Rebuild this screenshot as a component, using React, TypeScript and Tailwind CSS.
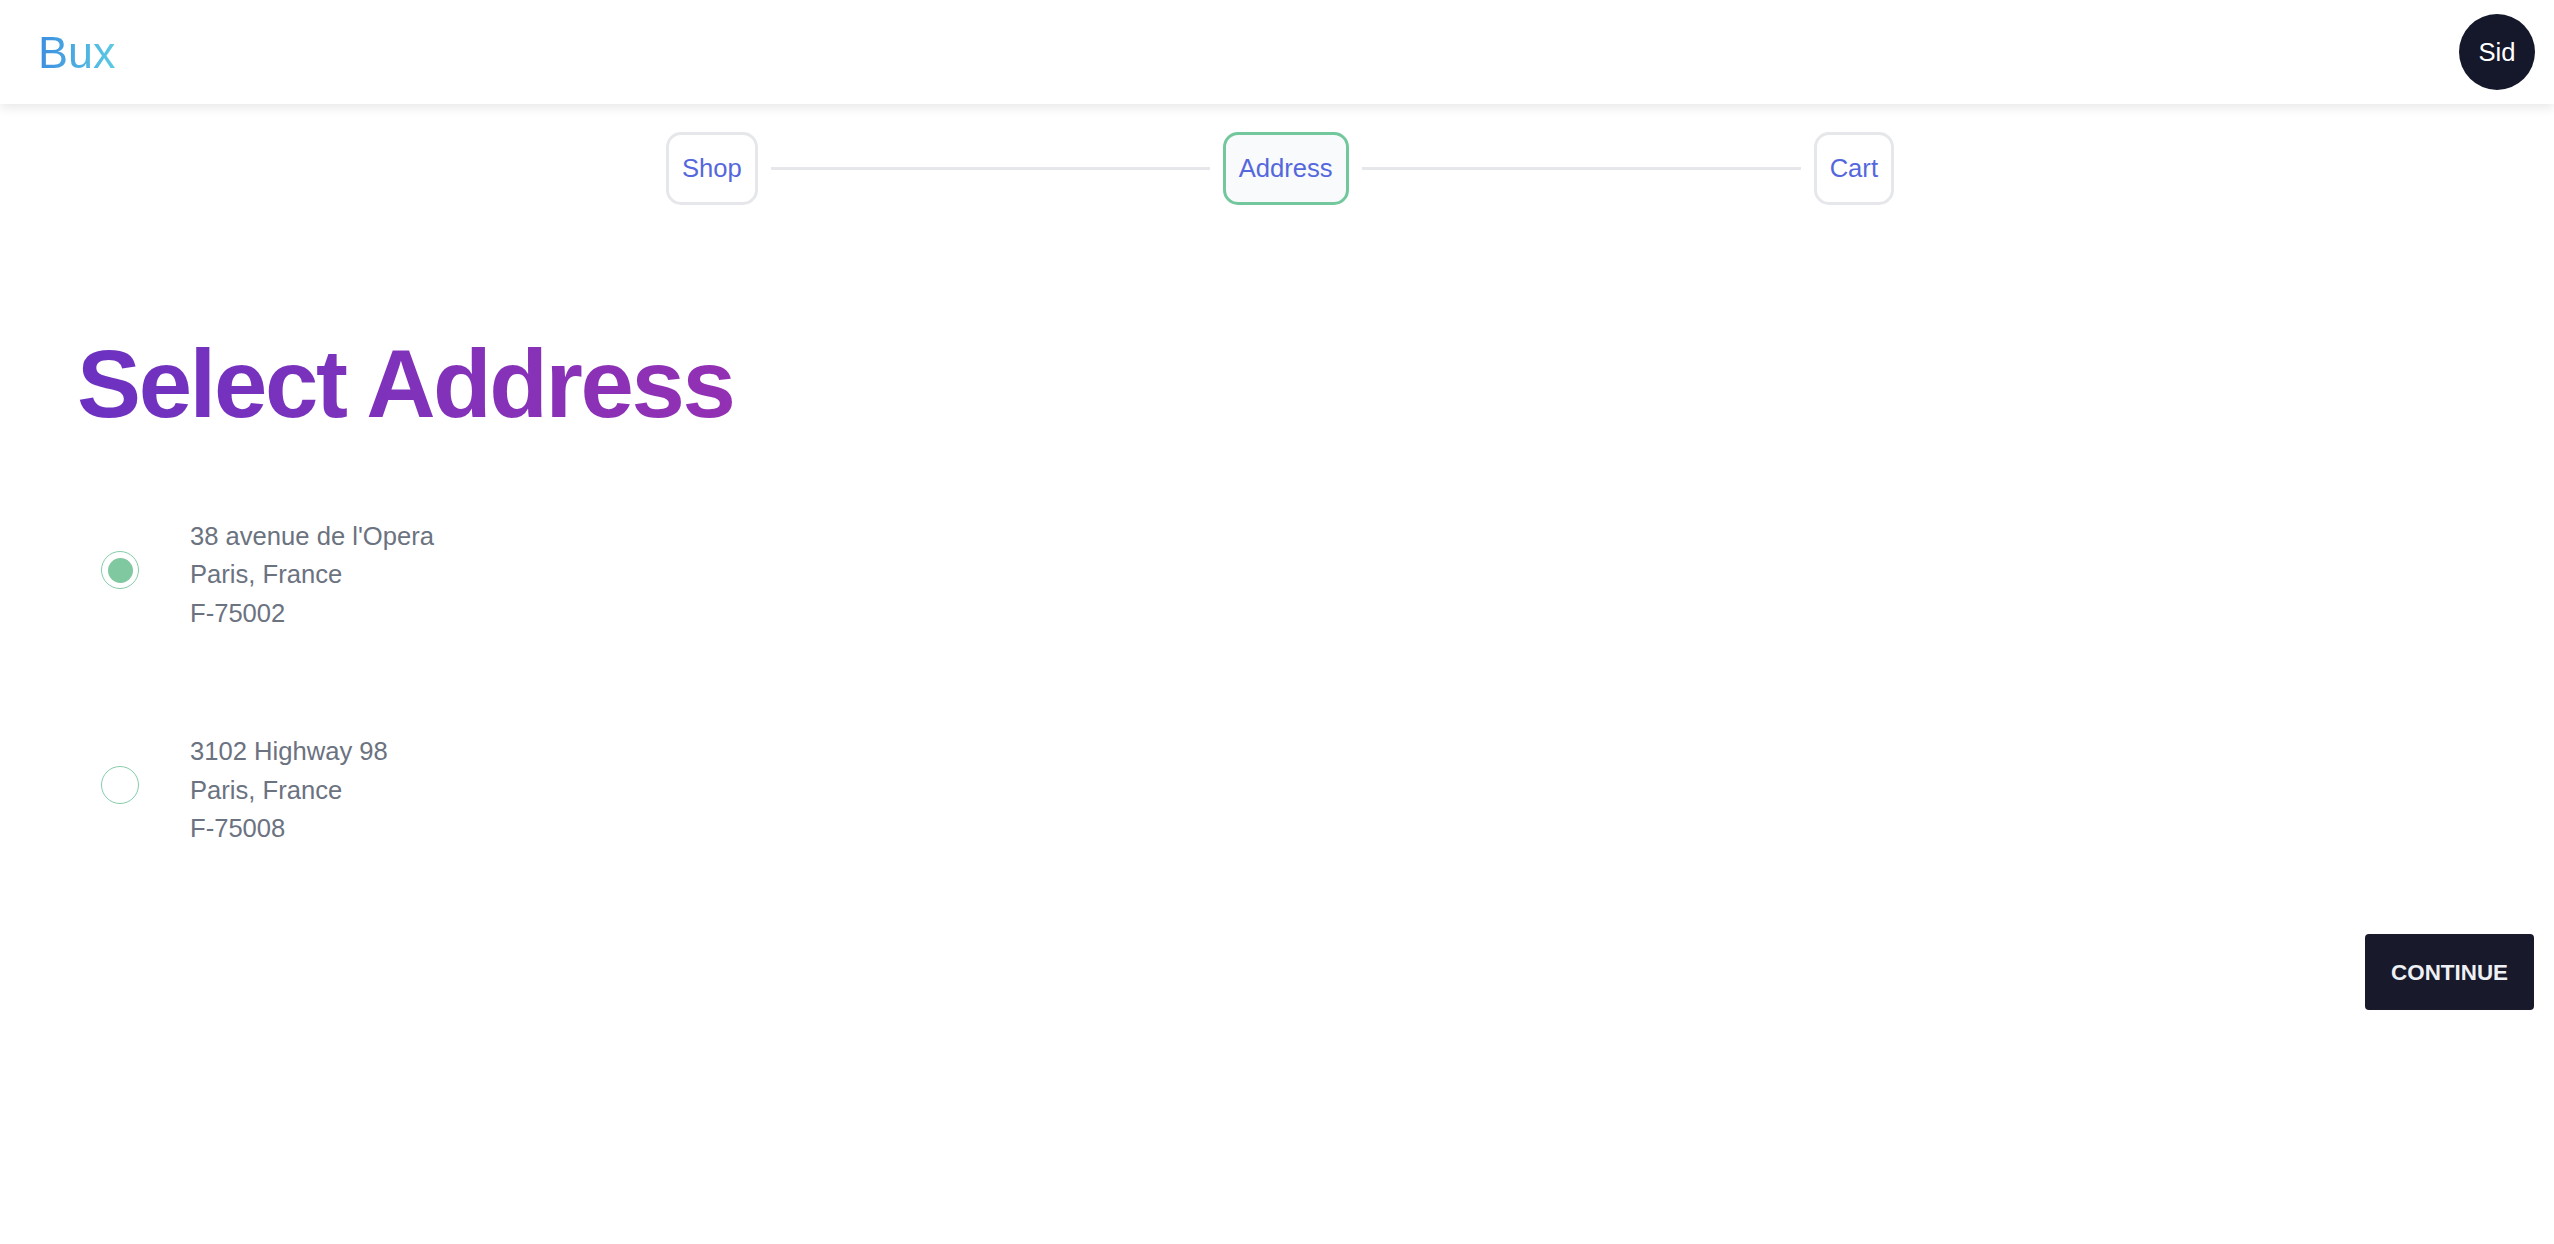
import React, { useState } from 'react';

type Address = { id: number; street: string; city: string; zip: string };

const addresses: Address[] = [
  { id: 1, street: "38 avenue de l'Opera", city: 'Paris, France', zip: 'F-75002' },
  { id: 2, street: '3102 Highway 98', city: 'Paris, France', zip: 'F-75008' },
];

const steps = ['Shop', 'Address', 'Cart'];

const Step: React.FC<{ label: string; active?: boolean }> = ({ label, active }) => (
  <div
    className={
      active
        ? 'px-[13px] py-[14px] leading-[39px] text-[25.6px] text-[#5567dc] rounded-[15px] border-[3px] border-[#72c89c] bg-[#f8fafc]'
        : 'px-[13px] py-[14px] leading-[39px] text-[25.6px] text-[#5567dc] rounded-[15px] border-[3px] border-[#e5e7eb] bg-white'
    }
  >
    {label}
  </div>
);

const Radio: React.FC<{ checked: boolean; onClick: () => void }> = ({ checked, onClick }) => (
  <button
    onClick={onClick}
    className="w-[38px] h-[38px] rounded-full border-[1.5px] border-[#86ccaa] flex items-center justify-center shrink-0 -mt-[9px]"
  >
    {checked && <span className="w-[25px] h-[25px] rounded-full bg-[#80c8a0]" />}
  </button>
);

export default function App() {
  const [selected, setSelected] = useState(1);

  return (
    <div className="min-h-screen bg-white font-['Liberation_Sans',Arial,sans-serif]">
      {/* Header */}
      <header className="relative z-10 h-[104px] flex items-center justify-between pl-[38px] pr-[19px] bg-white shadow-[0_4px_10px_rgba(0,0,0,0.09)]">
        <span className="text-[45px] leading-none bg-linear-to-r from-[#3d8ee0] to-[#5ccbe3] bg-clip-text text-transparent">
          Bux
        </span>
        <div className="w-[76px] h-[76px] rounded-full bg-[#15172a] text-white flex items-center justify-center text-[25.6px]">
          Sid
        </div>
      </header>

      {/* Stepper */}
      <div className="mt-[28px] flex justify-center pl-[6px]">
        <nav className="w-[1228px] flex items-center">
          {steps.map((s, i) => (
            <React.Fragment key={s}>
              <Step label={s} active={s === 'Address'} />
              {i < steps.length - 1 && <div className="flex-1 h-[3px] bg-[#e5e7eb] mx-[13px]" />}
            </React.Fragment>
          ))}
        </nav>
      </div>

      <main className="pl-[77px] pr-[20px]">
        <h1 className="mt-[131px] inline-block text-[96px] leading-none font-bold tracking-tight bg-linear-to-r from-[#6c31c1] to-[#9330b3] bg-clip-text text-transparent">
          Select Address
        </h1>

        <div className="mt-[35px] pl-[24px]">
          {addresses.map((a) => (
            <div key={a.id} className="flex items-center gap-[51px] py-[50px]">
              <Radio checked={selected === a.id} onClick={() => setSelected(a.id)} />
              <div className="text-[25.6px] leading-[38.4px] text-[#6b7280]">
                <div>{a.street}</div>
                <div>{a.city}</div>
                <div>{a.zip}</div>
              </div>
            </div>
          ))}
        </div>

        <div className="mt-[37px] flex justify-end">
          <button className="h-[76px] px-[26px] rounded-[4px] bg-[#181a2c] text-[#eef0f5] text-[22.4px] font-bold">
            CONTINUE
          </button>
        </div>
      </main>
    </div>
  );
}
